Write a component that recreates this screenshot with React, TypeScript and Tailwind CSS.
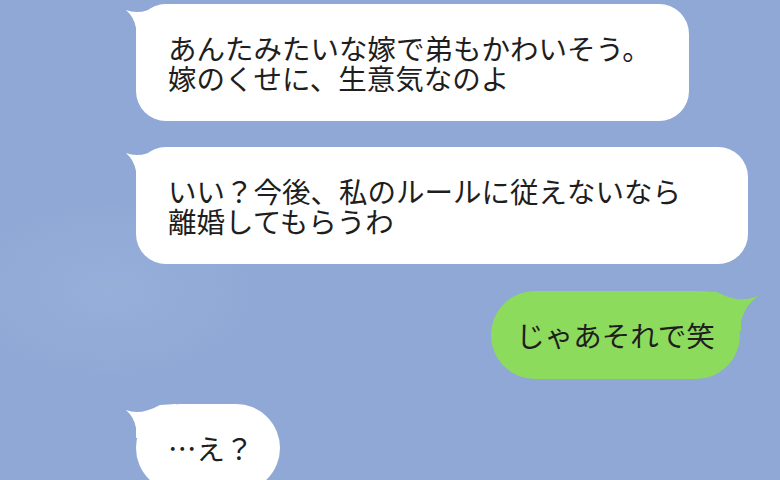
import React from "react";

const font = {
  fontFamily: '"Noto Sans CJK JP", "Noto Sans", sans-serif',
};

const LeftTail = () => (
  <svg
    className="absolute left-[-12px] top-0"
    width="52"
    height="34"
    viewBox="0 0 52 34"
  >
    <path
      d="M2 6 Q16 12 36 1 L52 0 L52 34 L12 34 L12 24 Q10 13 2 6 Z"
      fill="#ffffff"
    />
  </svg>
);

const RightTail = () => (
  <svg
    className="absolute right-[-21px] top-0"
    width="64"
    height="40"
    viewBox="0 0 64 40"
  >
    <path
      d="M62 4 Q44 14 20 1 L0 0 L0 40 L44 40 L44 30 Q48 14 62 4 Z"
      fill="#8ddb5c"
    />
  </svg>
);

const Received = ({
  lines,
  className,
}: {
  lines: string[];
  className: string;
}) => (
  <div
    className={`relative shrink-0 flex flex-col justify-center bg-white pl-[32px] text-[28.5px] leading-[30px] text-[#1e1e1e] ${className}`}
  >
    <LeftTail />
    {lines.map((l) => (
      <p key={l} className="relative whitespace-nowrap">
        {l}
      </p>
    ))}
  </div>
);

export default function App() {
  return (
    <div
      style={font}
      className="w-[780px] h-[480px] overflow-hidden flex flex-col bg-[#8fa8d5] bg-[radial-gradient(ellipse_150px_90px_at_110px_290px,#97b0da,transparent)]"
    >
      <Received
        className="ml-[136px] mt-[4px] w-[553px] h-[117px] rounded-[30px]"
        lines={["あんたみたいな嫁で弟もかわいそう。", "嫁のくせに、生意気なのよ"]}
      />
      <Received
        className="ml-[136px] mt-[26px] w-[612px] h-[117px] rounded-[30px]"
        lines={["いい？今後、私のルールに従えないなら", "離婚してもらうわ"]}
      />
      <div className="relative shrink-0 self-end mr-[40px] mt-[27px] w-[249px] h-[88px] rounded-[44px] bg-[#8ddb5c] flex items-center justify-center text-[28.5px] text-[#1e1e1e]">
        <RightTail />
        <span className="relative">じゃあそれで笑</span>
      </div>
      <Received
        className="ml-[136px] mt-[25px] w-[144px] h-[88px] rounded-[44px]"
        lines={["…え？"]}
      />
    </div>
  );
}
